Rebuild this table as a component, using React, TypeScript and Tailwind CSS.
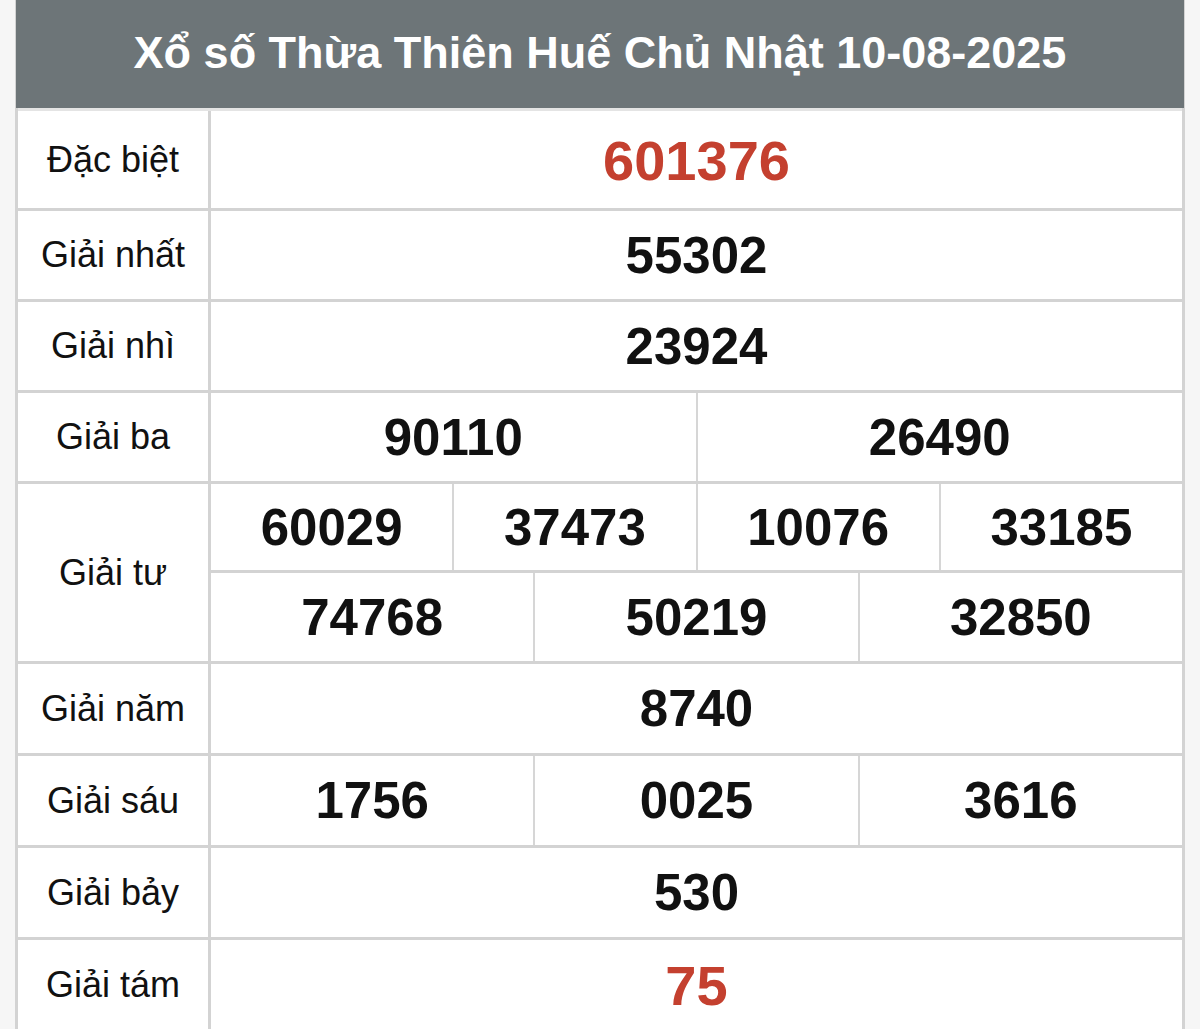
import React from 'react';

type Row = {
  label: string;
  lines: string[][];
  heights: string[];
  red?: boolean;
};

const rows: Row[] = [
  { label: 'Đặc biệt', lines: [['601376']], heights: ['h-[97px]'], red: true },
  { label: 'Giải nhất', lines: [['55302']], heights: ['h-[88px]'] },
  { label: 'Giải nhì', lines: [['23924']], heights: ['h-[88px]'] },
  { label: 'Giải ba', lines: [['90110', '26490']], heights: ['h-[88px]'] },
  {
    label: 'Giải tư',
    lines: [['60029', '37473', '10076', '33185'], ['74768', '50219', '32850']],
    heights: ['h-[89px]', 'h-[88px]'],
  },
  { label: 'Giải năm', lines: [['8740']], heights: ['h-[89px]'] },
  { label: 'Giải sáu', lines: [['1756', '0025', '3616']], heights: ['h-[89px]'] },
  { label: 'Giải bảy', lines: [['530']], heights: ['h-[89px]'] },
  { label: 'Giải tám', lines: [['75']], heights: ['h-[89px]'], red: true },
];

const App: React.FC = () => {
  return (
    <div className="min-h-screen bg-[#f6f6f6] px-[15px] font-['Liberation_Sans',Arial,sans-serif]">
      <div className="w-[1170px] bg-white border-x-[3px] border-[#d3d3d3]">
        <div className="h-[108px] -mx-[2px] bg-[#6d7578] flex items-center justify-center pb-[3px]">
          <h1 className="text-white font-bold text-[45px]">
            Xổ số Thừa Thiên Huế Chủ Nhật 10-08-2025
          </h1>
        </div>
        <div className="border-t-[3px] border-[#e4e4e4]">
          {rows.map((row) => (
            <div key={row.label} className="flex border-b-[3px] border-[#d3d3d3]">
              <div className="w-[193px] shrink-0 border-r-[3px] border-[#d3d3d3] flex items-center justify-center text-[36px] text-[#111]">
                {row.label}
              </div>
              <div className="flex-1 flex flex-col">
                {row.lines.map((line, li) => (
                  <div
                    key={li}
                    className={`flex ${row.heights[li]} ${
                      li < row.lines.length - 1 ? 'border-b-[3px] border-[#d3d3d3]' : ''
                    }`}
                  >
                    {line.map((num, ni) => (
                      <div
                        key={ni}
                        className={`flex-1 flex items-center justify-center font-bold pt-[2px] ${
                          row.red ? 'text-[56px] text-[#c4402f]' : 'text-[51px] text-[#111]'
                        } ${ni > 0 ? 'border-l-[2px] border-[#d6d6d6]' : ''}`}
                      >
                        {num}
                      </div>
                    ))}
                  </div>
                ))}
              </div>
            </div>
          ))}
        </div>
      </div>
    </div>
  );
};

export default App;
